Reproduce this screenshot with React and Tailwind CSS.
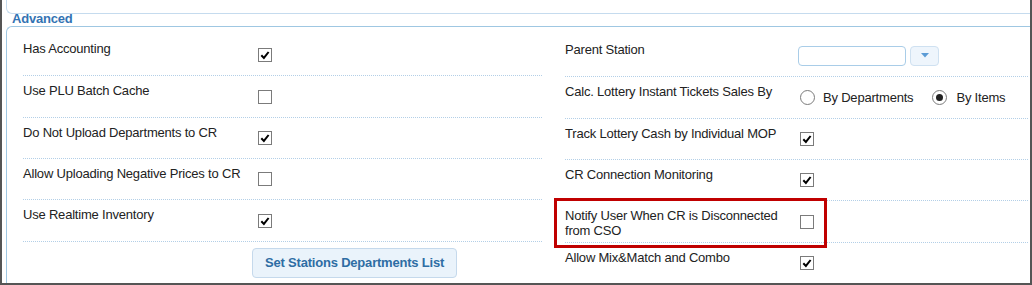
import React from "react";

const Check = ({ checked }) => (
  <span className="ml-[2px] w-[14px] h-[14px] border border-[#7b7b7b] bg-white flex items-center justify-center">
    {checked && (
      <svg width="12" height="12" viewBox="0 0 12 12">
        <path d="M2.3 6.2 L4.9 8.9 L9.6 3" fill="none" stroke="#000" strokeWidth="2" />
      </svg>
    )}
  </span>
);

const Radio = ({ checked }) => (
  <span className="w-[15px] h-[15px] rounded-full border border-[#7b7b7b] bg-white flex items-center justify-center">
    {checked && <span className="w-[7px] h-[7px] rounded-full bg-[#222]" />}
  </span>
);

const Row = ({ label, h, border = true, children }) => (
  <div className={`flex ${h} ${border ? "border-b border-dotted border-[#b3cfe7]" : ""}`}>
    <div className="w-[233px] shrink-0 pr-[6px] pt-[7px] leading-[15px]">{label}</div>
    <div className="flex items-center">{children}</div>
  </div>
);

export default function App() {
  return (
    <div className="relative w-[1032px] h-[285px] bg-white border-l-2 border-r-2 border-b-2 border-[#555] overflow-hidden font-['Liberation_Sans',Arial,sans-serif] text-[13px] tracking-[-0.2px] text-[#222]">
      {/* previous section's bottom edge */}
      <div className="ml-[4px] h-[14px] border-l border-b border-[#c5dbee] rounded-bl-[6px]" />

      {/* legend */}
      <div className="h-[12px] ml-[10px] leading-[10px] font-bold text-[#3373b3]">Advanced</div>

      {/* fieldset */}
      <div className="ml-[4px] h-[300px] border-t border-l border-[#9fc7e2] rounded-tl-[6px] flex pl-[16px] pr-[2px]">
        <div className="w-[519px] pt-[7px] flex flex-col">
          <Row label="Has Accounting" h="h-[42px]">
            <Check checked />
          </Row>
          <Row label="Use PLU Batch Cache" h="h-[42px]">
            <Check />
          </Row>
          <Row label="Do Not Upload Departments to CR" h="h-[41px]">
            <Check checked />
          </Row>
          <Row label="Allow Uploading Negative Prices to CR" h="h-[41px]">
            <Check />
          </Row>
          <Row label="Use Realtime Inventory" h="h-[42px]">
            <Check checked />
          </Row>
          <div className="flex h-[42px] items-center pl-[229px]">
            <button className="h-[30px] px-[12px] rounded-[4px] border border-[#c5d9ec] bg-[#eaf3fb] font-bold text-[#2e6da4] tracking-[-0.2px]">
              Set Stations Departments List
            </button>
          </div>
        </div>

        <div className="flex-1 ml-[23px] pt-[8px] flex flex-col">
          <Row label="Parent Station" h="h-[42px]">
            <div className="flex items-center gap-[4px]">
              <div className="w-[108px] h-[20px] rounded-[4px] border border-[#a9cde8] bg-white" />
              <div className="w-[29px] h-[20px] rounded-[4px] border border-[#cfe1f1] bg-[#eef5fc] flex items-center justify-center">
                <svg width="8" height="5" viewBox="0 0 8 5">
                  <path d="M0 0 L8 0 L4 4.5 Z" fill="#5b9bd5" />
                </svg>
              </div>
            </div>
          </Row>
          <Row label="Calc. Lottery Instant Tickets Sales By" h="h-[42px]">
            <div className="flex items-center ml-[2px]">
              <Radio />
              <span className="ml-[8px]">By Departments</span>
              <span className="ml-[19px]">
                <Radio checked />
              </span>
              <span className="ml-[9px]">By Items</span>
            </div>
          </Row>
          <Row label="Track Lottery Cash by Individual MOP" h="h-[41px]">
            <Check checked />
          </Row>
          <Row label="CR Connection Monitoring" h="h-[41px]">
            <Check checked />
          </Row>
          <Row label="Notify User When CR is Disconnected from CSO" h="h-[42px]">
            <Check />
          </Row>
          <Row label="Allow Mix&Match and Combo" h="h-[41px]">
            <Check checked />
          </Row>
        </div>
      </div>

      {/* annotation highlight */}
      <div className="absolute left-[552px] top-[198px] w-[273px] h-[50px] border-[3px] border-[#c00000]" />
    </div>
  );
}
